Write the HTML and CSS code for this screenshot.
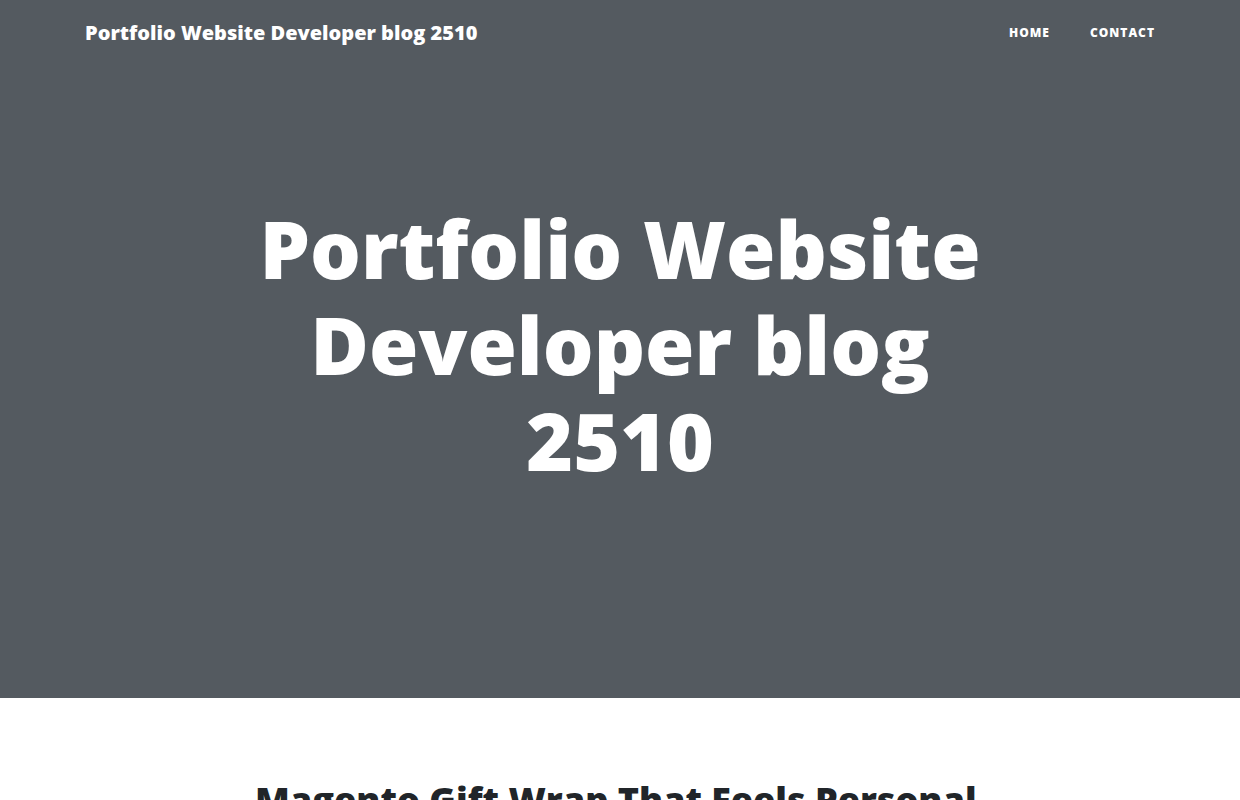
FILE: index.html
```html
<!DOCTYPE html>
<html lang="en">
<head>
<meta charset="utf-8">
<title>Portfolio Website Developer blog 2510</title>
<link rel="stylesheet" href="styles.css">
</head>
<body>
<nav class="navbar">
  <div class="nav-inner">
    <a class="brand" href="#">Portfolio Website Developer blog 2510</a>
    <ul class="nav-links">
      <li><a href="#">Home</a></li>
      <li><a href="#">Contact</a></li>
    </ul>
  </div>
</nav>
<header class="masthead">
  <div class="site-heading">
    <h1>Portfolio Website Developer blog 2510</h1>
    <span class="subheading"></span>
  </div>
</header>
<main class="content">
  <div class="post-preview">
    <a href="#"><h2 class="post-title">Magento Gift Wrap That Feels Personal</h2></a>
  </div>
</main>
</body>
</html>
```
FILE: styles.css
```css
* { box-sizing: border-box; }
html, body { margin: 0; padding: 0; }
body {
  font-family: "Open Sans", "Liberation Sans", sans-serif;
  color: #212529;
  background: #fff;
  font-size: 20px;
}
a { text-decoration: none; color: inherit; }

.navbar {
  position: absolute;
  top: 0; left: 0; right: 0;
  z-index: 3;
}
.nav-inner {
  max-width: 1140px;
  margin: 0 auto;
  padding: 0 15px;
  height: 64px;
  display: flex;
  align-items: center;
  justify-content: space-between;
}
.brand {
  color: #fff;
  font-weight: 800;
  font-size: 20px;
  padding-left: 20px;
}
.nav-links {
  list-style: none;
  margin: 0; padding: 0;
  display: flex;
}
.nav-links a {
  display: block;
  padding: 0 20px;
  color: #fff;
  font-size: 12px;
  font-weight: 800;
  letter-spacing: 1px;
  text-transform: uppercase;
}

.masthead {
  background-color: #545a60;
  margin: 0;
  padding: 200px 0 200px;
  color: #fff;
}
.site-heading {
  max-width: 730px;
  margin: 0 auto;
  text-align: center;
}
.site-heading h1 {
  margin: 0 0 8px;
  font-size: 80px;
  font-weight: 800;
  line-height: 1.2;
}
.subheading {
  display: block;
  margin: 10px 0 0;
  font-size: 24px;
  font-weight: 300;
  line-height: 1.1;
}

.content {
  max-width: 730px;
  margin: 0 auto;
  padding-top: 50px;
}
.post-title {
  margin: 30px 0 10px;
  font-size: 36px;
  font-weight: 800;
  line-height: 1.2;
  color: #212529;
}
```
